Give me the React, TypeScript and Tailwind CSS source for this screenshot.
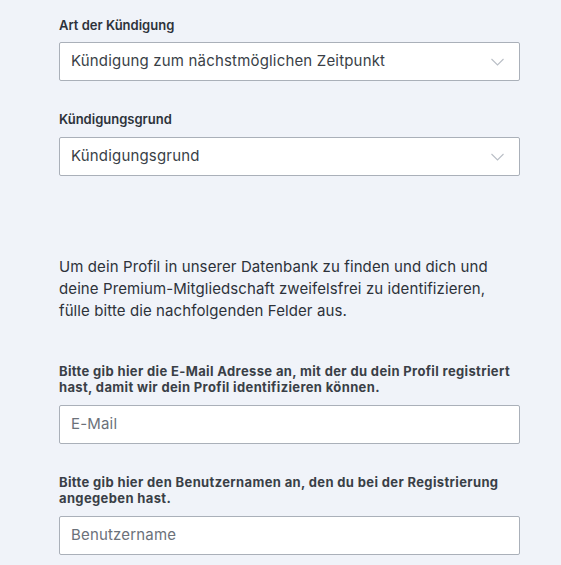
import React from "react";

const Chevron = () => (
  <svg width="13" height="8" viewBox="0 0 13 8" fill="none" className="shrink-0">
    <path d="M0.5 1l6 6 6-6" stroke="#b9bec6" strokeWidth="1.1" />
  </svg>
);

export default function App() {
  return (
    <div className="min-h-[565px] w-[561px] bg-[#f0f3f9] text-[#2d323a]" style={{ fontFamily: "Inter, 'Noto Sans', sans-serif" }}>
      <div className="pl-[59px] pt-[15px] w-[520px]">
        <div className="text-[13px] leading-[20px] font-semibold">Art der Kündigung</div>
        <div className="mt-[7px] h-[39px] bg-white border border-[#aab0b9] rounded-[2px] flex items-center justify-between pl-[11px] pr-[15px]">
          <span className="text-[15px] tracking-[0.18px] text-[#3a3f47]">Kündigung zum nächstmöglichen Zeitpunkt</span>
          <Chevron />
        </div>
        <div className="mt-[28px] text-[13px] leading-[20px] font-semibold">Kündigungsgrund</div>
        <div className="mt-[8px] h-[39px] bg-white border border-[#aab0b9] rounded-[2px] flex items-center justify-between pl-[11px] pr-[15px]">
          <span className="text-[15px] tracking-[0.18px] text-[#3a3f47]">Kündigungsgrund</span>
          <Chevron />
        </div>
        <p className="mt-[80px] text-[15px] leading-[22px] tracking-[0.1px] text-[#2d323a] pr-[10px]">
          Um dein Profil in unserer Datenbank zu finden und dich und deine Premium-Mitgliedschaft zweifelsfrei zu identifizieren, fülle bitte die nachfolgenden Felder aus.
        </p>
        <div className="mt-[41px] text-[13px] leading-[16px] tracking-[0.36px] font-bold text-[#3a3f47]">
          Bitte gib hier die E-Mail Adresse an, mit der du dein Profil registriert hast, damit wir dein Profil identifizieren können.
        </div>
        <div className="mt-[10px] h-[39px] bg-white border border-[#aab0b9] rounded-[2px] flex items-center pl-[11px]">
          <span className="text-[15px] tracking-[0.18px] text-[#6b717a]">E-Mail</span>
        </div>
        <div className="mt-[30px] text-[13px] leading-[16px] tracking-[0.36px] font-bold text-[#3a3f47]">
          Bitte gib hier den Benutzernamen an, den du bei der Registrierung angegeben hast.
        </div>
        <div className="mt-[10px] h-[39px] bg-white border border-[#aab0b9] rounded-[2px] flex items-center pl-[11px]">
          <span className="text-[15px] tracking-[0.18px] text-[#6b717a]">Benutzername</span>
        </div>
      </div>
    </div>
  );
}
